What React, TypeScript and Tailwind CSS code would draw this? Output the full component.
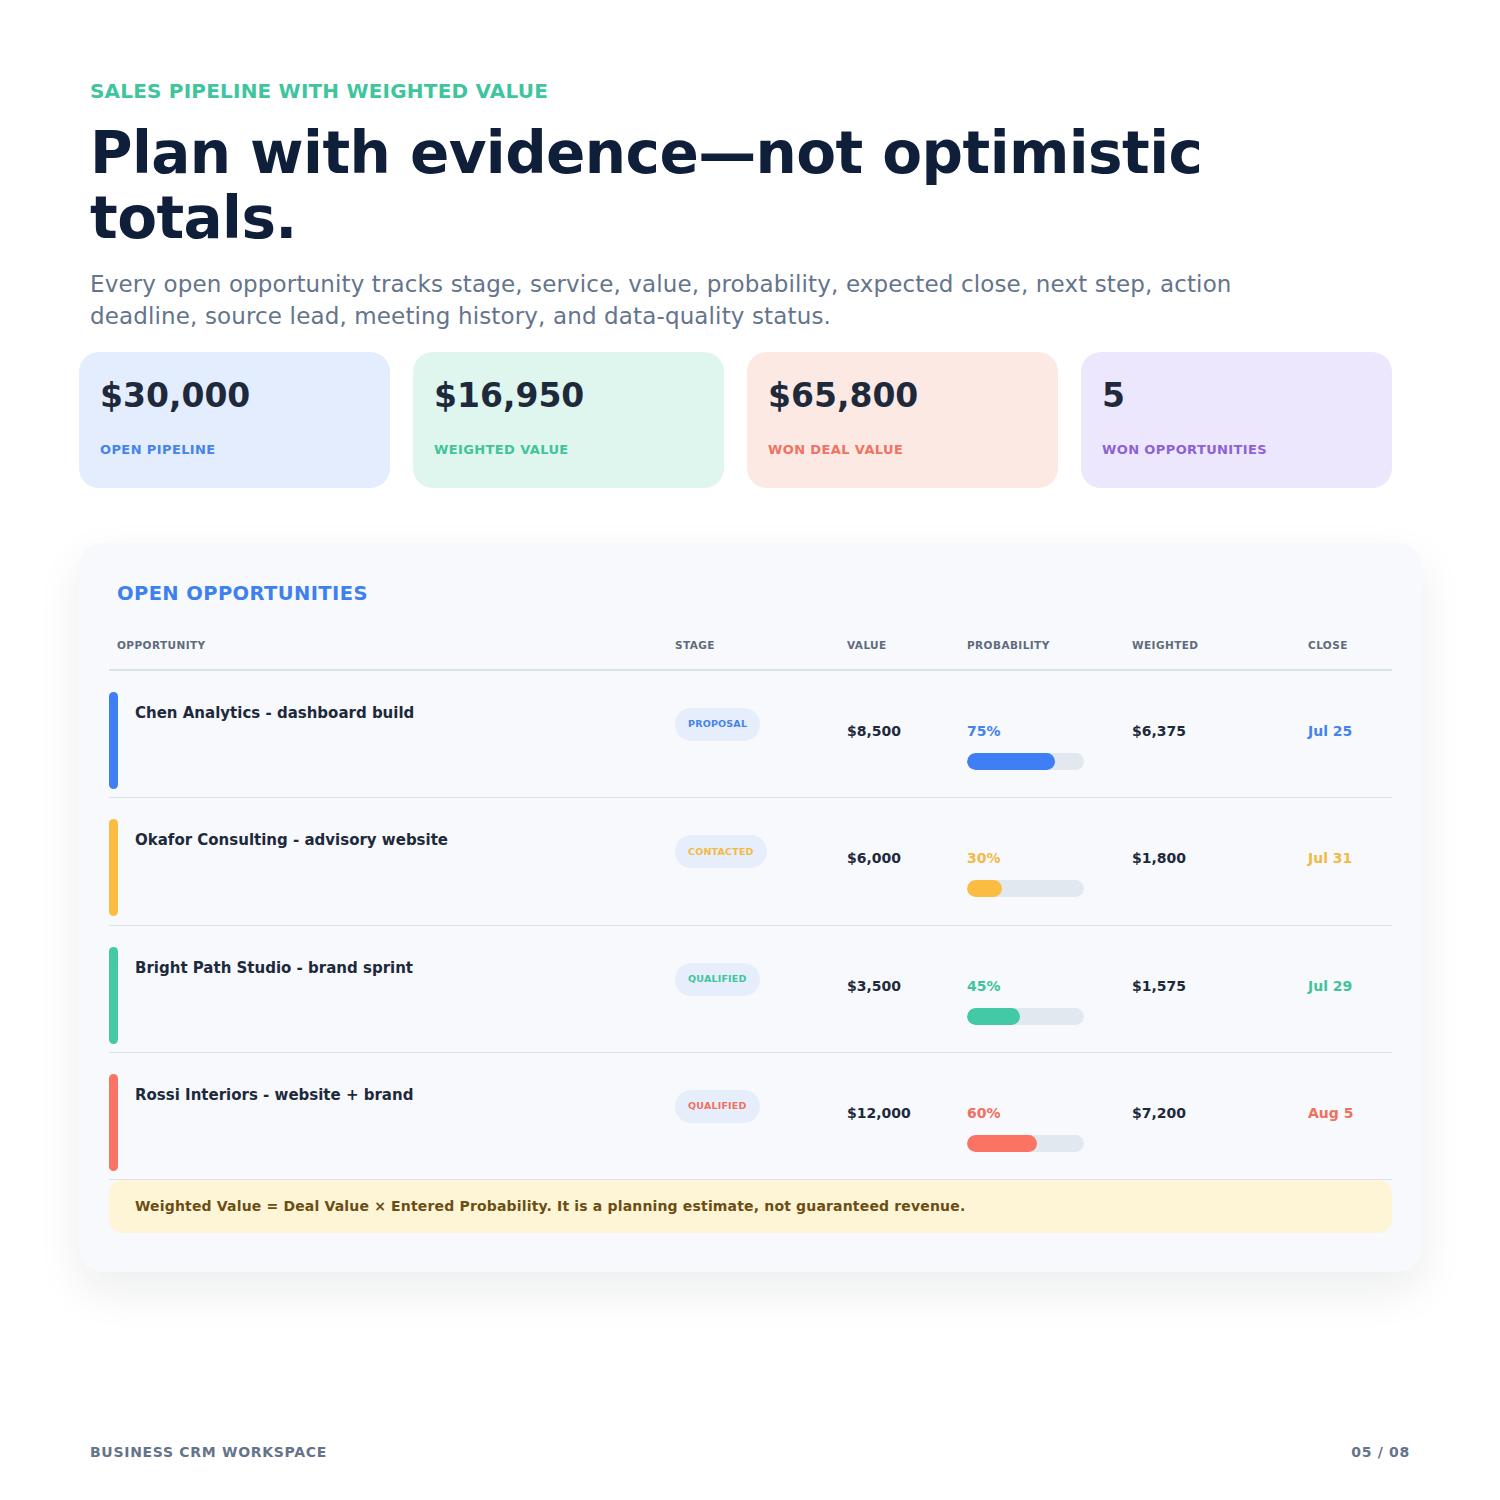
import React from "react";

type Row = {
  name: string;
  stage: string;
  value: string;
  prob: number;
  weighted: string;
  close: string;
  bar: string;
  text: string;
};

const rows: Row[] = [
  { name: "Chen Analytics - dashboard build", stage: "PROPOSAL", value: "$8,500", prob: 75, weighted: "$6,375", close: "Jul 25", bar: "bg-[#3f7ff6]", text: "text-[#4583ec]" },
  { name: "Okafor Consulting - advisory website", stage: "CONTACTED", value: "$6,000", prob: 30, weighted: "$1,800", close: "Jul 31", bar: "bg-[#fbbd41]", text: "text-[#f2b945]" },
  { name: "Bright Path Studio - brand sprint", stage: "QUALIFIED", value: "$3,500", prob: 45, weighted: "$1,575", close: "Jul 29", bar: "bg-[#44c9a5]", text: "text-[#41c39d]" },
  { name: "Rossi Interiors - website + brand", stage: "QUALIFIED", value: "$12,000", prob: 60, weighted: "$7,200", close: "Aug 5", bar: "bg-[#fb7362]", text: "text-[#f0705f]" },
];

const stats = [
  { v: "$30,000", l: "OPEN PIPELINE", bg: "bg-[#e4edfd]", c: "text-[#4683ea]" },
  { v: "$16,950", l: "WEIGHTED VALUE", bg: "bg-[#dff6ee]", c: "text-[#3fc49c]" },
  { v: "$65,800", l: "WON DEAL VALUE", bg: "bg-[#fde9e4]", c: "text-[#f07262]" },
  { v: "5", l: "WON OPPORTUNITIES", bg: "bg-[#ede7fd]", c: "text-[#8c62d4]" },
];

const cols = "grid grid-cols-[558px_172px_120px_165px_176px_92px]";

export default function App() {
  return (
    <div className="w-[1500px] h-[1500px] bg-white font-['DejaVu_Sans',sans-serif] flex flex-col px-[90px] pt-[79px]">
      <div className="text-[20px] leading-[24px] font-bold tracking-[0.01em] text-[#3fc59d]">
        SALES PIPELINE WITH WEIGHTED VALUE
      </div>
      <h1 className="mt-[18px] text-[58px] leading-[65px] font-bold text-[#0f1f3a] tracking-[-0.01em]">
        Plan with evidence—not optimistic
        <br />
        totals.
      </h1>
      <p className="mt-[17px] w-[1170px] text-[23px] leading-[32px] text-[#64748b] tracking-[0.006em]">
        Every open opportunity tracks stage, service, value, probability, expected close, next step, action deadline, source lead, meeting history, and data-quality status.
      </p>

      <div className="mt-[20px] ml-[-11px] w-[1313px] grid grid-cols-4 gap-[23px]">
        {stats.map((s) => (
          <div key={s.l} className={`h-[136px] rounded-[20px] ${s.bg} px-[21px] pt-[24px]`}>
            <div className="text-[33px] leading-[40px] font-bold text-[#1e293b]">{s.v}</div>
            <div className={`mt-[25px] text-[13px] leading-[18px] font-bold tracking-[0.03em] ${s.c}`}>{s.l}</div>
          </div>
        ))}
      </div>

      <div className="mt-[55px] ml-[-11px] w-[1343px] rounded-[24px] bg-[#f7f9fc] shadow-[0_18px_45px_rgba(15,23,42,0.08)] px-[30px] pt-[37px] pb-[39px]">
        <div className="pl-[8px] text-[19.5px] leading-[28px] font-bold tracking-[0.02em] text-[#3f80ef]">
          OPEN OPPORTUNITIES
        </div>
        <div className={`${cols} mt-[29px] pb-[16px] border-b-2 border-[#dbe3ea] text-[10.5px] leading-[16px] font-bold tracking-[0.04em] text-[#5f6b7c]`}>
          <div className="pl-[8px]">OPPORTUNITY</div>
          <div className="pl-[8px]">STAGE</div>
          <div className="pl-[8px]">VALUE</div>
          <div className="pl-[8px]">PROBABILITY</div>
          <div className="pl-[8px]">WEIGHTED</div>
          <div className="pl-[8px]">CLOSE</div>
        </div>
        {rows.map((r) => (
          <div key={r.name} className={`${cols} h-[127.3px] border-b border-[#dbe3ea]`}>
            <div className="flex items-start">
              <div className={`mt-[21px] w-[9px] h-[97px] rounded-full ${r.bar}`} />
              <div className="ml-[17px] mt-[32px] text-[15px] leading-[20px] font-bold text-[#1e293b]">{r.name}</div>
            </div>
            <div className="pl-[8px] pt-[37px]">
              <span className={`inline-flex items-center h-[33px] px-[13px] rounded-full bg-[#e6eefb] text-[9.5px] font-bold tracking-[0.02em] ${r.text}`}>
                {r.stage}
              </span>
            </div>
            <div className="pl-[8px] pt-[50px] text-[14px] leading-[20px] font-bold text-[#1e293b]">{r.value}</div>
            <div className="pl-[8px] pt-[50px]">
              <div className={`text-[14px] leading-[20px] font-bold ${r.text}`}>{r.prob}%</div>
              <div className="mt-[12px] w-[117px] h-[17px] rounded-full bg-[#e2e8f0] overflow-hidden">
                <div className={`h-full rounded-full ${r.bar}`} style={{ width: `${r.prob}%` }} />
              </div>
            </div>
            <div className="pl-[8px] pt-[50px] text-[14px] leading-[20px] font-bold text-[#1e293b]">{r.weighted}</div>
            <div className={`pl-[8px] pt-[50px] text-[14px] leading-[20px] font-bold ${r.text}`}>{r.close}</div>
          </div>
        ))}
        <div className="h-[53px] rounded-[14px] bg-[#fef5d6] flex items-center pl-[26px] text-[14px] tracking-[0.012em] font-bold text-[#6b4e14]">
          Weighted Value = Deal Value × Entered Probability. It is a planning estimate, not guaranteed revenue.
        </div>
      </div>

      <div className="mt-auto mb-[38px] flex justify-between text-[14px] leading-[20px] font-bold tracking-[0.05em] text-[#64748b]">
        <span>BUSINESS CRM WORKSPACE</span>
        <span>05 / 08</span>
      </div>
    </div>
  );
}
